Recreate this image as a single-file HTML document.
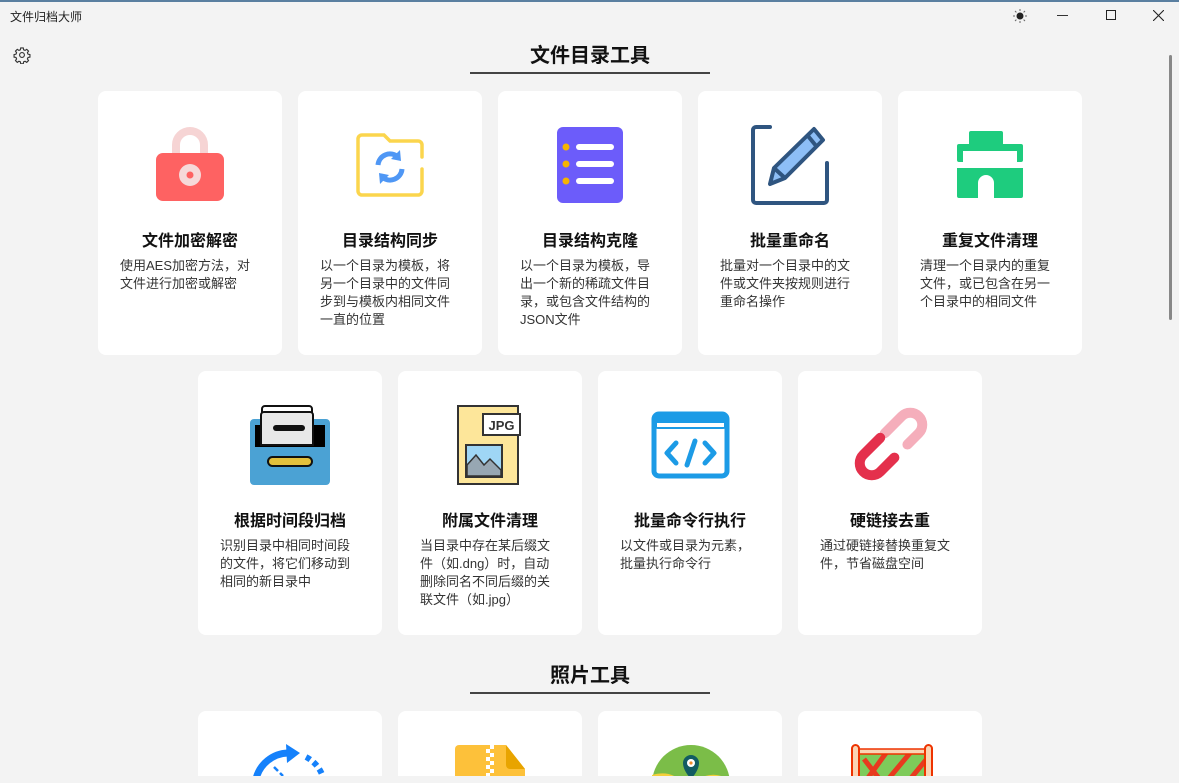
<!DOCTYPE html>
<html><head><meta charset="utf-8"><style>
*{margin:0;padding:0;box-sizing:border-box}
body{width:1179px;height:783px;overflow:hidden;background:#f3f3f3;font-family:"Liberation Sans","Noto Sans CJK SC",sans-serif;position:relative;color:#111}
.top{position:absolute;left:0;top:0;width:1179px;height:2px;background:#5a7fa0}
.ttl{position:absolute;left:10px;top:8px;font-size:12px;color:#222}
.h{position:absolute;left:470px;width:240px;text-align:center;font-size:20px;font-weight:bold;color:#111}
.ul{position:absolute;left:470px;width:240px;height:2px;background:#444}
.card{position:absolute;width:184px;height:264px;background:#fff;border-radius:8px}
.card svg{position:absolute;left:52px;top:34px;width:80px;height:80px;overflow:visible}
.card .t{position:absolute;top:136px;left:0;width:184px;text-align:center;font-size:16px;font-weight:bold;color:#111}
.card .d{position:absolute;top:166px;left:22px;width:142px;font-size:13px;line-height:18px;color:#333}
.clip{position:absolute;left:0;top:0;width:1179px;height:776px;overflow:hidden}
.sb{position:absolute;left:1169px;top:55px;width:3px;height:265px;background:#888;border-radius:2px}
</style></head><body>
<div class="clip">
<div class="top"></div>
<div class="ttl">文件归档大师</div>
<svg style="position:absolute;left:1012px;top:8px" width="16" height="16" viewBox="0 0 16 16"><circle cx="8" cy="8" r="3.5" fill="#222"/><g stroke="#666" stroke-width="1"><line x1="8" y1="1" x2="8" y2="3"/><line x1="8" y1="13" x2="8" y2="15"/><line x1="1" y1="8" x2="3" y2="8"/><line x1="13" y1="8" x2="15" y2="8"/><line x1="3" y1="3" x2="4.4" y2="4.4"/><line x1="11.6" y1="11.6" x2="13" y2="13"/><line x1="3" y1="13" x2="4.4" y2="11.6"/><line x1="11.6" y1="4.4" x2="13" y2="3"/></g></svg>
<div style="position:absolute;left:1057px;top:15px;width:11px;height:1px;background:#333"></div>
<div style="position:absolute;left:1106px;top:10px;width:10px;height:10px;border:1px solid #222"></div>
<svg style="position:absolute;left:1153px;top:10px" width="11" height="11" viewBox="0 0 11 11"><path d="M0 0L11 11M11 0L0 11" stroke="#222" stroke-width="1.1"/></svg>
<svg style="position:absolute;left:13px;top:46px" width="18" height="18" viewBox="0 0 24 24" fill="none" stroke="#333" stroke-width="1.5"><circle cx="12" cy="12" r="3.2"/><path d="M10.3 2.5h3.4l.5 2.6 1.9.8 2.2-1.5 2.4 2.4-1.5 2.2.8 1.9 2.6.5v3.4l-2.6.5-.8 1.9 1.5 2.2-2.4 2.4-2.2-1.5-1.9.8-.5 2.6h-3.4l-.5-2.6-1.9-.8-2.2 1.5-2.4-2.4 1.5-2.2-.8-1.9-2.6-.5v-3.4l2.6-.5.8-1.9-1.5-2.2 2.4-2.4 2.2 1.5 1.9-.8z"/></svg>

<div class="h" style="top:39px">文件目录工具</div>
<div class="ul" style="top:72px"></div>

<div class="card" style="left:98px;top:91px">
<svg viewBox="0 0 80 80"><path d="M26 32V20a14 14 0 0 1 28 0v12" fill="none" stroke="#f6d4d4" stroke-width="8"/><rect x="6" y="28" width="68" height="48" rx="7" fill="#fe6262"/><circle cx="40" cy="50" r="11" fill="#f6d9d9"/><circle cx="40" cy="50" r="3.5" fill="#fe6262"/></svg>
<div class="t">文件加密解密</div><div class="d">使用AES加密方法，对文件进行加密或解密</div></div>

<div class="card" style="left:298px;top:91px">
<svg viewBox="0 0 80 80"><path d="M72 32V20a4 4 0 0 0-4-4H40l-6-6H12a4 4 0 0 0-4 4v52a4 4 0 0 0 4 4h56a4 4 0 0 0 4-4V44" fill="none" stroke="#fbd54d" stroke-width="3.5" stroke-linecap="round"/><path d="M28 40a12 12 0 0 1 20-8" fill="none" stroke="#4f97f5" stroke-width="5"/><path d="M50 25l1 11-10-2z" fill="#4f97f5"/><path d="M52 44a12 12 0 0 1-20 8" fill="none" stroke="#4f97f5" stroke-width="5"/><path d="M30 59l-1-11 10 2z" fill="#4f97f5"/></svg>
<div class="t">目录结构同步</div><div class="d">以一个目录为模板，将另一个目录中的文件同步到与模板内相同文件一直的位置</div></div>

<div class="card" style="left:498px;top:91px">
<svg viewBox="0 0 80 80"><rect x="7" y="2" width="66" height="76" rx="6" fill="#6c5cfa"/><g fill="#f5b400"><circle cx="16" cy="22" r="3.5"/><circle cx="16" cy="39" r="3.5"/><circle cx="16" cy="56" r="3.5"/></g><g fill="#fff"><rect x="26" y="19" width="38" height="6" rx="3"/><rect x="26" y="36" width="38" height="6" rx="3"/><rect x="26" y="53" width="38" height="6" rx="3"/></g></svg>
<div class="t">目录结构克隆</div><div class="d">以一个目录为模板，导出一个新的稀疏文件目录，或包含文件结构的JSON文件</div></div>

<div class="card" style="left:698px;top:91px">
<svg viewBox="0 0 80 80"><path d="M20 2H6a3 3 0 0 0-3 3v70a3 3 0 0 0 3 3h68a3 3 0 0 0 3-3V38" fill="none" stroke="#2f5580" stroke-width="4" stroke-linecap="round"/><path d="M64 4l9 11-38 38-15 6 4-16z" fill="#8dbef6" stroke="#2f5580" stroke-width="4" stroke-linejoin="round"/><path d="M58 11l9 11M24 43l11 10" stroke="#2f5580" stroke-width="4"/></svg>
<div class="t">批量重命名</div><div class="d">批量对一个目录中的文件或文件夹按规则进行重命名操作</div></div>

<div class="card" style="left:898px;top:91px">
<svg viewBox="0 0 80 80"><rect x="19" y="6" width="34" height="16" rx="2" fill="#1ecc7e"/><rect x="7" y="19" width="66" height="18" rx="2" fill="#1ecc7e"/><rect x="13" y="26" width="54" height="11" fill="#fff"/><path d="M7 43h66v28a2 2 0 0 1-2 2H44V58a8 8 0 0 0-16 0v15H9a2 2 0 0 1-2-2z" fill="#1ecc7e"/></svg>
<div class="t">重复文件清理</div><div class="d">清理一个目录内的重复文件，或已包含在另一个目录中的相同文件</div></div>

<div class="card" style="left:198px;top:371px">
<svg viewBox="0 0 80 80"><rect x="0" y="14" width="80" height="66" rx="4" fill="#4ba2d4"/><rect x="5" y="20" width="70" height="22" fill="#000"/><path d="M12 36V4a3 3 0 0 1 3-3h44a3 3 0 0 1 3 3v32z" fill="#fff" stroke="#111" stroke-width="2"/><path d="M11 40V10a3 3 0 0 1 3-3h46a3 3 0 0 1 3 3v30z" fill="#e8e8e8" stroke="#111" stroke-width="2"/><rect x="23" y="20" width="32" height="6" rx="3" fill="#111"/><rect x="18" y="52" width="44" height="9" rx="4.5" fill="#e2c03c" stroke="#111" stroke-width="2"/></svg>
<div class="t">根据时间段归档</div><div class="d">识别目录中相同时间段的文件，将它们移动到相同的新目录中</div></div>

<div class="card" style="left:398px;top:371px">
<svg viewBox="0 0 80 80"><rect x="8" y="1" width="60" height="78" fill="#fde69a" stroke="#333" stroke-width="2"/><rect x="33" y="9" width="37" height="21" fill="#fff" stroke="#333" stroke-width="2"/><text x="51.5" y="25" text-anchor="middle" font-family="Liberation Sans" font-weight="bold" font-size="13" fill="#333">JPG</text><rect x="16" y="40" width="36" height="32" fill="#9fd6f5" stroke="#333" stroke-width="2"/><path d="M17 71V60l9-10 8 10 6-6 11 11v6z" fill="#97a7b3" stroke="#333" stroke-width="1.5"/></svg>
<div class="t">附属文件清理</div><div class="d">当目录中存在某后缀文件（如.dng）时，自动删除同名不同后缀的关联文件（如.jpg）</div></div>

<div class="card" style="left:598px;top:371px">
<svg viewBox="0 0 80 80"><rect x="4" y="9" width="73" height="62" rx="5" fill="none" stroke="#1c9be6" stroke-width="5"/><rect x="4" y="9" width="73" height="15" rx="4" fill="#1c9be6"/><rect x="7" y="18" width="67" height="4" fill="#fff"/><path d="M26 38l-9 10 9 10M55 38l9 10-9 10M45 36l-8 24" fill="none" stroke="#1c9be6" stroke-width="5" stroke-linecap="round" stroke-linejoin="round"/></svg>
<div class="t">批量命令行执行</div><div class="d">以文件或目录为元素，批量执行命令行</div></div>

<div class="card" style="left:798px;top:371px">
<svg viewBox="0 0 80 80"><g transform="translate(56,24) rotate(45)"><path d="M-12 18V-6A12 12 0 0 1 12 -6V10" fill="none" stroke="#f5aebb" stroke-width="10" stroke-linecap="round"/></g><g transform="translate(26,54) rotate(45)"><path d="M-12 -18V6A12 12 0 0 0 12 6V-14" fill="none" stroke="#e4304c" stroke-width="10" stroke-linecap="round"/></g></svg>
<div class="t">硬链接去重</div><div class="d">通过硬链接替换重复文件，节省磁盘空间</div></div>

<div class="h" style="top:659px">照片工具</div>
<div class="ul" style="top:692px"></div>

<div class="card" style="left:198px;top:711px">
<svg viewBox="0 0 80 80"><path d="M6 34A34 34 0 0 1 38 8" fill="none" stroke="#1581fb" stroke-width="7"/><path d="M36 -1l14 9-13 10z" fill="#1581fb"/><path d="M56 12a34 34 0 0 1 18 24" fill="none" stroke="#1581fb" stroke-width="6" stroke-dasharray="5 4"/><path d="M24 22l4 4M30 28l3 3" stroke="#1581fb" stroke-width="2.5"/></svg></div>
<div class="card" style="left:398px;top:711px">
<svg viewBox="0 0 80 80"><path d="M5 4a4 4 0 0 1 4-4h47l19 24v56H5z" fill="#fdc13a"/><path d="M56 0l19 24H60a4 4 0 0 1-4-4z" fill="#e8a400"/><g fill="#fff"><rect x="40" y="0" width="4" height="4"/><rect x="36" y="4" width="4" height="4"/><rect x="40" y="8" width="4" height="4"/><rect x="36" y="12" width="4" height="4"/><rect x="40" y="16" width="4" height="4"/><rect x="36" y="20" width="4" height="4"/><rect x="40" y="24" width="4" height="4"/><rect x="36" y="28" width="4" height="4"/></g></svg></div>
<div class="card" style="left:598px;top:711px">
<svg viewBox="0 0 80 80"><circle cx="41" cy="39" r="39" fill="#7bbd48"/><path d="M2 30q14 -4 24 2t26 0t28 4v10H2z" fill="#f4cf3a"/><path d="M41 10a8 8 0 0 1 8 8c0 8-8 16-8 16s-8-8-8-16a8 8 0 0 1 8-8z" fill="#125c62"/><circle cx="41" cy="18" r="4" fill="#fff"/><circle cx="41" cy="18" r="1.6" fill="#f28a2a"/></svg></div>
<div class="card" style="left:798px;top:711px">
<svg viewBox="0 0 80 80"><rect x="4" y="8" width="76" height="72" fill="#7ecb5a"/><path d="M10 44l26-36M30 44l30-36M52 44l28-34M14 14l20 26" stroke="#e83a1f" stroke-width="5"/><rect x="4" y="4" width="76" height="5" fill="#fbd4b4" stroke="#e30" stroke-width="1.5"/><rect x="2" y="0" width="7" height="80" rx="3.5" fill="#fbd4b4" stroke="#e30" stroke-width="2"/><rect x="75" y="0" width="7" height="80" rx="3.5" fill="#fbd4b4" stroke="#e30" stroke-width="2"/></svg></div>

<div class="sb"></div>
</div>
</body></html>
